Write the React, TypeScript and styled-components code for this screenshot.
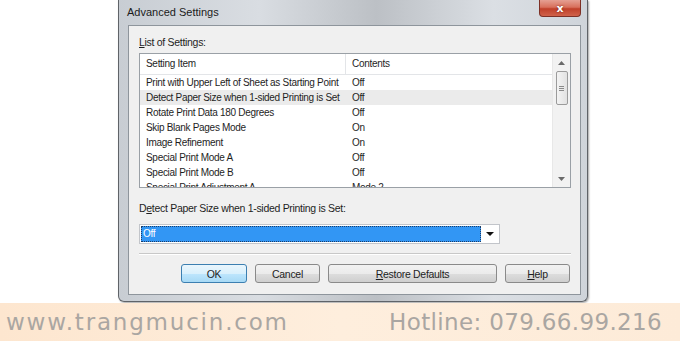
import React from "react";
import styled, { createGlobalStyle } from "styled-components";

const Global = createGlobalStyle`
  html, body {
    margin: 0;
    padding: 0;
    background: #ffffff;
  }
`;

const Page = styled.div`
  width: 680px;
  height: 341px;
  display: flex;
  flex-direction: column;
  overflow: hidden;
  font-family: "Liberation Sans", Arial, sans-serif;
`;

const Stage = styled.div`
  height: 303px;
  background: #ffffff;
  padding-left: 118px;
  box-sizing: border-box;
`;

const Window = styled.div`
  width: 470px;
  height: 302px;
  box-sizing: border-box;
  border: 1px solid #5f6368;
  border-top: none;
  border-radius: 0 0 6px 6px;
  background: linear-gradient(90deg, #c8cdd3 0%, #d9dde2 30%, #bcc0c5 55%, #dbdfe4 80%, #cfd4da 100%);
  padding: 0 6px 6px 9px;
  display: flex;
  flex-direction: column;
  box-shadow: 1px 1px 2px rgba(0, 0, 0, 0.35);
`;

const TitleBar = styled.div`
  height: 25px;
  display: flex;
  align-items: flex-start;
  justify-content: space-between;
`;

const Title = styled.div`
  font-size: 11px;
  color: #1b1b1b;
  padding-top: 6px;
  margin-left: -1px;
`;

const CloseButton = styled.div`
  width: 42px;
  height: 17px;
  box-sizing: border-box;
  border: 1px solid #7d3026;
  border-top: none;
  border-radius: 0 0 4px 4px;
  background: linear-gradient(180deg, #e5a093 0%, #d8705c 45%, #c0402a 55%, #d0624a 100%);
  color: #ffffff;
  font-family: "DejaVu Sans", sans-serif;
  font-weight: bold;
  font-size: 11px;
  display: flex;
  align-items: center;
  justify-content: center;
  text-shadow: 0 0 2px #6a1a10;
`;

const Client = styled.div`
  flex: 1;
  background: #f0f0f0;
  border: 1px solid #8e959c;
  padding: 8px 9px 0 10px;
  display: flex;
  flex-direction: column;
  font-size: 10.5px;
  letter-spacing: -0.3px;
  color: #1e1e1e;
`;

const Label = styled.div`
  height: 17px;
  line-height: 17px;
  margin-bottom: 2px;
`;

const ListBox = styled.div`
  height: 135px;
  box-sizing: border-box;
  border: 1px solid #9aa0a6;
  background: #ffffff;
  display: flex;
  overflow: hidden;
`;

const ListMain = styled.div`
  flex: 1;
  display: flex;
  flex-direction: column;
  font-size: 10px;
  letter-spacing: -0.3px;
`;

const HeaderRow = styled.div`
  height: 20px;
  display: grid;
  grid-template-columns: 206px 1fr;
  border-bottom: 1px solid #e3e5e8;
`;

const HeaderCell = styled.div<{ $divider?: boolean }>`
  padding-left: 6px;
  line-height: 20px;
  border-right: ${(p) => (p.$divider ? "1px solid #e3e5e8" : "none")};
`;

const Row = styled.div<{ $hot?: boolean }>`
  height: 15px;
  display: grid;
  grid-template-columns: 206px 1fr;
  background: ${(p) => (p.$hot ? "#ebebeb" : "transparent")};
  line-height: 15px;
  white-space: nowrap;
`;

const Cell = styled.div`
  padding-left: 6px;
  overflow: hidden;
`;

const ScrollBar = styled.div`
  width: 17px;
  background: #f2f2f2;
  border-left: 1px solid #e8e8e8;
  display: flex;
  flex-direction: column;
  align-items: center;
`;

const Arrow = styled.div`
  height: 17px;
  display: flex;
  align-items: center;
  justify-content: center;
`;

const Thumb = styled.div`
  width: 12px;
  height: 34px;
  box-sizing: border-box;
  border: 1px solid #9b9b9b;
  border-radius: 2px;
  background: linear-gradient(90deg, #f3f3f3, #e2e2e2);
  display: flex;
  align-items: center;
  justify-content: center;
`;

const Spacer = styled.div`
  flex: 1;
`;

const ComboLabel = styled.div`
  height: 17px;
  line-height: 17px;
  margin-top: 12px;
`;

const Combo = styled.div`
  margin-top: 7px;
  width: 361px;
  height: 20px;
  box-sizing: border-box;
  border: 1px solid #c2c5ca;
  background: #ffffff;
  display: flex;
  align-items: center;
  padding: 1px;
`;

const ComboValue = styled.div`
  width: 340px;
  height: 16px;
  box-sizing: border-box;
  background: #3296f4;
  border: 1px dotted #1d3c66;
  color: #ffffff;
  line-height: 14px;
  padding-left: 1px;
  font-size: 10px;
`;

const ComboArrow = styled.div`
  flex: 1;
  display: flex;
  justify-content: center;
  align-items: center;
`;

const Separator = styled.div`
  margin-top: 9px;
  height: 0;
  border-top: 1px solid #c8c8c8;
  border-bottom: 1px solid #ffffff;
`;

const ButtonRow = styled.div`
  margin-top: 9px;
  display: flex;
  justify-content: flex-end;
  gap: 8px;
  padding-right: 1px;
`;

const Button = styled.div<{ $w: number; $default?: boolean }>`
  width: ${(p) => p.$w}px;
  height: 19px;
  box-sizing: border-box;
  border: 1px solid ${(p) => (p.$default ? "#3c7fb1" : "#8a8a8a")};
  border-radius: 3px;
  background: ${(p) =>
    p.$default
      ? "linear-gradient(180deg, #eaf6fd 0%, #d9f0fc 50%, #bee6fd 51%, #a7d9f5 100%)"
      : "linear-gradient(180deg, #f2f2f2 0%, #ebebeb 50%, #dddddd 51%, #cfcfcf 100%)"};
  display: flex;
  align-items: center;
  justify-content: center;
  color: #1e1e1e;
`;

const Banner = styled.div`
  flex: 1;
  background: linear-gradient(90deg, #fde6cf 0%, #feeedd 50%, #fdebd8 100%);
  display: flex;
  align-items: center;
  justify-content: space-between;
  padding: 0 18px 0 6px;
  font-family: "DejaVu Sans", sans-serif;
  font-size: 23px;
  color: #aaa6a2;
`;

const BannerText = styled.span<{ $spacing: number }>`
  letter-spacing: ${(p) => p.$spacing}px;
`;

const settings: [string, string][] = [
  ["Print with Upper Left of Sheet as Starting Point", "Off"],
  ["Detect Paper Size when 1-sided Printing is Set", "Off"],
  ["Rotate Print Data 180 Degrees", "Off"],
  ["Skip Blank Pages Mode", "On"],
  ["Image Refinement", "On"],
  ["Special Print Mode A", "Off"],
  ["Special Print Mode B", "Off"],
  ["Special Print Adjustment A", "Mode 2"],
];

const App = () => {
  return (
    <Page>
      <Global />
      <Stage>
        <Window>
          <TitleBar>
            <Title>Advanced Settings</Title>
            <CloseButton>x</CloseButton>
          </TitleBar>
          <Client>
            <Label>
              <u>L</u>ist of Settings:
            </Label>
            <ListBox>
              <ListMain>
                <HeaderRow>
                  <HeaderCell $divider>Setting Item</HeaderCell>
                  <HeaderCell>Contents</HeaderCell>
                </HeaderRow>
                {settings.map(([item, value], i) => (
                  <Row key={item} $hot={i === 1}>
                    <Cell>{item}</Cell>
                    <Cell>{value}</Cell>
                  </Row>
                ))}
              </ListMain>
              <ScrollBar>
                <Arrow>
                  <svg width="7" height="4" viewBox="0 0 7 4">
                    <path d="M0 4 L3.5 0 L7 4 Z" fill="#6a6a6a" />
                  </svg>
                </Arrow>
                <Thumb>
                  <svg width="5" height="5" viewBox="0 0 5 5">
                    <path d="M0 0.5 H5 M0 2.5 H5 M0 4.5 H5" stroke="#8a8a8a" strokeWidth="1" />
                  </svg>
                </Thumb>
                <Spacer />
                <Arrow>
                  <svg width="7" height="4" viewBox="0 0 7 4">
                    <path d="M0 0 L3.5 4 L7 0 Z" fill="#6a6a6a" />
                  </svg>
                </Arrow>
              </ScrollBar>
            </ListBox>
            <ComboLabel>
              D<u>e</u>tect Paper Size when 1-sided Printing is Set:
            </ComboLabel>
            <Combo>
              <ComboValue>Off</ComboValue>
              <ComboArrow>
                <svg width="8" height="4" viewBox="0 0 8 4">
                  <path d="M0 0 L4 4 L8 0 Z" fill="#111" />
                </svg>
              </ComboArrow>
            </Combo>
            <Separator />
            <ButtonRow>
              <Button $w={66} $default>
                OK
              </Button>
              <Button $w={65}>Cancel</Button>
              <Button $w={169}>
                <span>
                  <u>R</u>estore Defaults
                </span>
              </Button>
              <Button $w={65}>
                <span>
                  <u>H</u>elp
                </span>
              </Button>
            </ButtonRow>
          </Client>
        </Window>
      </Stage>
      <Banner>
        <BannerText $spacing={1.8}>www.trangmucin.com</BannerText>
        <BannerText $spacing={0.35}>Hotline: 079.66.99.216</BannerText>
      </Banner>
    </Page>
  );
};

export default App;
